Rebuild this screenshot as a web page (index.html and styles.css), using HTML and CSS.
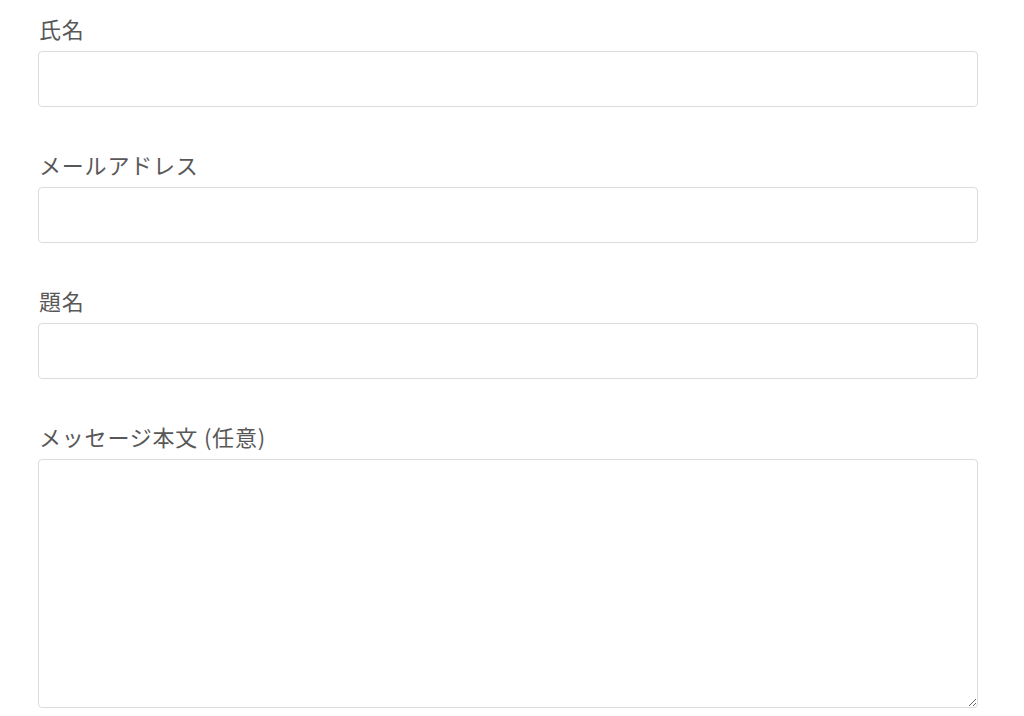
FILE: index.html
```html
<!DOCTYPE html>
<html lang="ja">
<head>
<meta charset="utf-8">
<link rel="stylesheet" href="styles.css">
</head>
<body>
<form class="form">
  <div class="field">
    <label class="label">氏名</label>
    <input class="input" type="text">
  </div>
  <div class="field">
    <label class="label">メールアドレス</label>
    <input class="input" type="email">
  </div>
  <div class="field">
    <label class="label">題名</label>
    <input class="input" type="text">
  </div>
  <div class="field">
    <label class="label">メッセージ本文 (任意)</label>
    <textarea class="textarea"></textarea>
  </div>
</form>
</body>
</html>
```
FILE: styles.css
```css
html, body {
  margin: 0;
  padding: 0;
  background: #fff;
}
body {
  font-family: "Noto Sans CJK JP", "Noto Sans", sans-serif;
  color: #555;
}
.form {
  display: flex;
  flex-direction: column;
  gap: 43px;
  padding: 14px 0 0 38px;
  width: 940px;
}
.field {
  display: flex;
  flex-direction: column;
  gap: 9px;
}
.label {
  font-size: 22px;
  font-weight: 400;
  line-height: 28px;
  letter-spacing: 0.8px;
  color: #585858;
  padding-left: 1px;
}
.input, .textarea {
  box-sizing: border-box;
  width: 940px;
  margin: 0;
  border: 1px solid #dcdcdc;
  border-radius: 4px;
  background: #fff;
  font: inherit;
}
.input {
  height: 56px;
}
.textarea {
  height: 249px;
  resize: vertical;
  display: block;
}
```
